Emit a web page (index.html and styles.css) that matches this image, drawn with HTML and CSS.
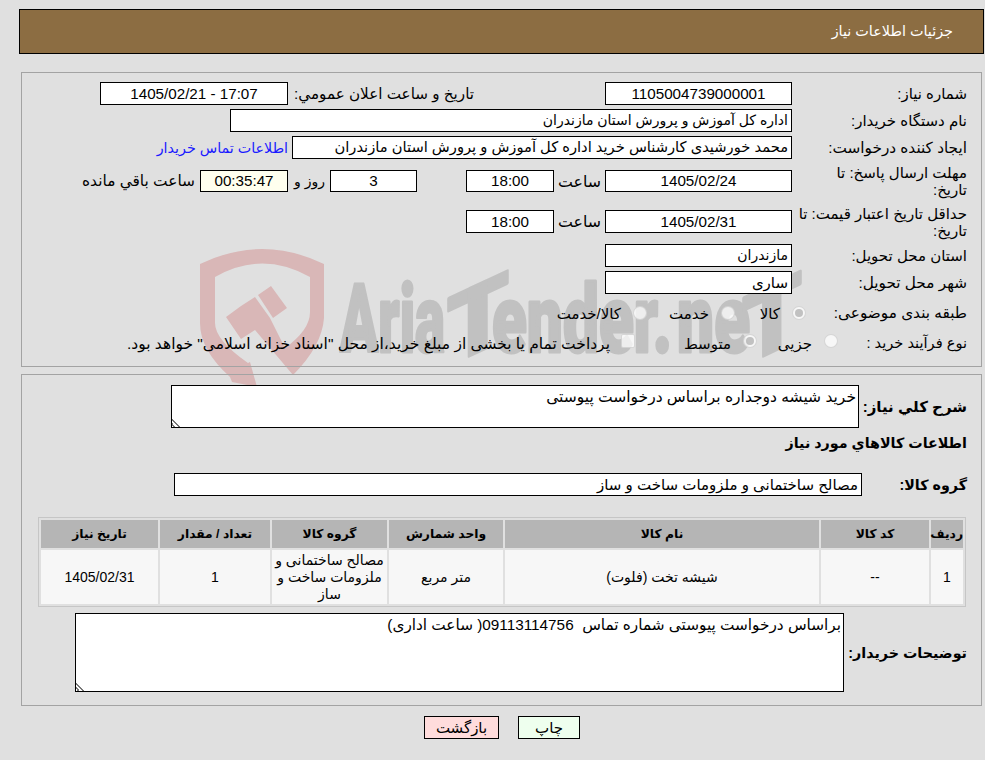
FILE: index.html
```html
<!DOCTYPE html>
<html lang="fa" dir="rtl">
<head>
<meta charset="utf-8">
<title>جزئیات اطلاعات نیاز</title>
<link rel="stylesheet" href="styles.css">
</head>
<body>
<svg class="watermark" viewBox="0 0 985 760" width="985" height="760" aria-hidden="true">
  <path class="wm-red" d="M200 264Q262 234 324 264V318Q322 346 293 375L255 330L241 339L226 317L241 306L255 297L270 318L285 348Q310 330 310 312V277Q262 250 215 277V323Q215 340 248 363L250 362L257 387L232 382L230 377Q200 350 200 323Z"/>
  <path class="wm-red" d="M258 295L271 286L287 308L273 318Z"/>
  <g class="wm-text">
    <text x="340" y="352" textLength="105" lengthAdjust="spacingAndGlyphs">Aria</text>
    <text class="wm-t1" x="447" y="352" textLength="62" lengthAdjust="spacingAndGlyphs">T</text>
    <text x="492" y="352" textLength="180" lengthAdjust="spacingAndGlyphs">ender.</text>
    <text x="677" y="352" textLength="73" lengthAdjust="spacingAndGlyphs">ne</text>
    <text class="wm-t2" x="742" y="352" textLength="60" lengthAdjust="spacingAndGlyphs">T</text>
  </g>
</svg>

<header class="page-head">جزئیات اطلاعات نیاز</header>

<section class="panel panel-info">
  <div class="row">
    <div class="label">شماره نیاز:</div>
    <div class="box w187 center">1105004739000001</div>
    <div class="label-announce">تاریخ و ساعت اعلان عمومي:</div>
    <div class="box w188 center" dir="ltr">1405/02/21 - 17:07</div>
  </div>
  <div class="row">
    <div class="label">نام دستگاه خریدار:</div>
    <div class="box w562 t14">اداره کل آموزش و پرورش استان مازندران</div>
  </div>
  <div class="row">
    <div class="label t153">ایجاد کننده درخواست:</div>
    <div class="box w500 t147">محمد خورشیدی کارشناس خرید اداره کل آموزش و پرورش استان مازندران</div>
    <a class="contact" href="#">اطلاعات تماس خریدار</a>
  </div>
  <div class="row row-deadline">
    <div class="label">مهلت ارسال پاسخ: تا تاریخ:</div>
    <div class="box w187 h22 center">1405/02/24</div>
    <div class="hour">ساعت</div>
    <div class="box w88 h22 center">18:00</div>
    <div class="spacer49"></div>
    <div class="box w87 h22 center">3</div>
    <div class="days">روز و</div>
    <div class="box w88 h22 center remain">00:35:47</div>
    <div class="remain-text">ساعت باقي مانده</div>
  </div>
  <div class="row row-validity">
    <div class="label label-validity">حداقل تاریخ اعتبار قیمت: تا تاریخ:</div>
    <div class="box w187 center">1405/02/31</div>
    <div class="hour">ساعت</div>
    <div class="box w88 center">18:00</div>
  </div>
  <div class="row">
    <div class="label">استان محل تحویل:</div>
    <div class="box w187 t14">مازندران</div>
  </div>
  <div class="row">
    <div class="label t153">شهر محل تحویل:</div>
    <div class="box w187">ساری</div>
  </div>
  <div class="row row-subject">
    <div class="label label-subject t153">طبقه بندی موضوعی:</div>
    <div class="choice w71"><span class="radio on"></span>کالا</div>
    <div class="choice w88"><span class="radio"></span>خدمت</div>
    <div class="choice"><span class="radio"></span>کالا/خدمت</div>
  </div>
  <div class="row row-process">
    <div class="label label-process">نوع فرآیند خرید :</div>
    <div class="choice w81"><span class="radio"></span>جزیی</div>
    <div class="choice w122"><span class="radio on"></span>متوسط</div>
    <div class="choice t155"><span class="check"></span>پرداخت تمام یا بخشی از مبلغ خرید،از محل "اسناد خزانه اسلامی" خواهد بود.</div>
  </div>
</section>

<section class="panel panel-goods">
  <div class="row row-desc">
    <div class="label-strong label-desc">شرح کلي نیاز:</div>
    <textarea class="area area-desc" readonly>خرید شیشه دوجداره براساس درخواست پیوستی</textarea>
  </div>
  <h2 class="goods-title">اطلاعات کالاهاي مورد نیاز</h2>
  <div class="row row-group">
    <div class="label-strong w105">گروه کالا:</div>
    <div class="box w688">مصالح ساختمانی و ملزومات ساخت و ساز</div>
  </div>
  <table class="goods">
    <colgroup>
      <col class="c1"><col class="c2"><col class="c3"><col class="c4"><col class="c5"><col class="c6"><col class="c7">
    </colgroup>
    <thead>
      <tr><th>ردیف</th><th>کد کالا</th><th>نام کالا</th><th>واحد شمارش</th><th>گروه کالا</th><th>تعداد / مقدار</th><th>تاریخ نیاز</th></tr>
    </thead>
    <tbody>
      <tr><td>1</td><td>--</td><td>شیشه تخت (فلوت)</td><td>متر مربع</td><td>مصالح ساختمانی و ملزومات ساخت و ساز</td><td>1</td><td>1405/02/31</td></tr>
    </tbody>
  </table>
  <div class="row row-note">
    <div class="label-strong w123">توضیحات خریدار:</div>
    <textarea class="area area-note" readonly>براساس درخواست پیوستی شماره تماس  09113114756( ساعت اداری)</textarea>
  </div>
</section>

<div class="actions">
  <button class="btn btn-print" type="button">چاپ</button>
  <button class="btn btn-back" type="button">بازگشت</button>
</div>
</body>
</html>
```
FILE: styles.css
```css
* { box-sizing: border-box; }
html, body { margin: 0; padding: 0; }
body {
  position: relative;
  width: 985px;
  height: 760px;
  overflow: hidden;
  background: #e0e0e0;
  color: #000;
  font-family: "Liberation Sans", "DejaVu Sans", sans-serif;
  font-size: 15px;
}
.watermark { position: absolute; left: 0; top: 0; direction: ltr; }
.wm-red { fill: #d9b7b7; }
.wm-text {
  fill: #c1c1c1;
  stroke: #c1c1c1;
  stroke-width: 3px;
  stroke-linejoin: round;
  font-family: Roboto, sans-serif;
  font-weight: 900;
  font-size: 95px;
}
.wm-t1 { transform-box: fill-box; transform-origin: center; transform: skewY(-25deg); }
.wm-t2 { transform-box: fill-box; transform-origin: center; transform: skewY(-25deg); }

.t14 { font-size: 14px; }
.t147 { font-size: 14.7px; }
.t153 { font-size: 15.3px; }
.t155 { font-size: 15.5px; }

.page-head {
  position: relative;
  height: 45px;
  margin: 9px 1px 0 19px;
  padding: 0 30px 0 0;
  border: 1px solid #000;
  background: #8c6d42;
  color: #fff;
  font-size: 14.4px;
  line-height: 43px;
}
.panel {
  position: relative;
  margin: 0 3px 0 21px;
  border: 1px solid #a3a3a3;
}
.panel-info { height: 295px; margin-top: 18px; padding: 9px 14px 0 0; }
.panel-goods { height: 332px; margin-top: 7px; padding: 10px 14px 0 0; }

.row { display: flex; align-items: center; height: 23px; margin-bottom: 4px; }
.row-deadline { height: 36px; }
.row-validity { height: 37px; }
.row-subject { margin-top: 7px; margin-bottom: 8px; }
.row-process { margin-bottom: 0; }
.label { flex: none; width: 175px; padding-left: 8px; line-height: 17px; }
.label-validity { padding-left: 0; }
.label-subject { width: 150px; padding-left: 0; }
.label-process { width: 118px; padding-left: 0; font-size: 14.6px; }
.label-announce { flex: none; width: 186px; margin-right: 131px; font-size: 15.2px; white-space: nowrap; }
.label-strong { flex: none; font-size: 14.3px; font-weight: 700; white-space: nowrap; }
.label-desc { width: 108px; font-size: 15px; }
.w105 { width: 105px; }
.w123 { width: 123px; }

.box {
  flex: none;
  height: 23px;
  padding: 0 3px;
  border: 1px solid #000;
  background: #fff;
  line-height: 21px;
  white-space: nowrap;
  overflow: hidden;
}
.h22 { height: 22px; line-height: 20px; }
.center { font-size: 15.2px; text-align: center; }
.remain { background: #ffffee; }
.w187 { width: 187px; }
.w188 { width: 188px; }
.w562 { width: 562px; }
.w500 { width: 500px; }
.w88 { width: 88px; }
.w87 { width: 87px; }
.w688 { width: 688px; }
.contact { margin-right: 4px; color: #1a1aff; font-size: 14.3px; text-decoration: none; }
.hour { flex: none; width: 51px; font-size: 15.8px; text-align: center; }
.spacer49 { flex: none; width: 49px; }
.days { flex: none; width: 42px; padding-right: 5px; font-size: 14px; }
.remain-text { flex: none; margin-right: 5px; font-size: 15.4px; }

.choice { display: flex; align-items: center; flex: none; }
.row-subject .choice { padding-top: 3px; }
.w71 { width: 71px; }
.w81 { width: 81px; }
.w88.choice { width: 88px; }
.w122 { width: 122px; }
.radio, .check {
  position: relative;
  flex: none;
  width: 14px;
  height: 14px;
  margin: 0 11px 0 12px;
  border: 1px solid rgba(200, 200, 200, .7);
  background: rgba(255, 255, 255, .72);
}
.row-subject .radio { margin-top: -3px; }
.row-process .radio, .row-process .check { margin-top: -5px; }
.radio { border-radius: 50%; }
.check { border-radius: 2px; margin-left: 11px; }
.radio.on::after {
  content: "";
  position: absolute;
  inset: 2px;
  border-radius: 50%;
  background: rgba(170, 170, 170, .7);
}

.row-desc { height: 43px; margin-bottom: 0; }
.area {
  flex: none;
  display: block;
  margin: 0;
  padding: 2px;
  border: 1px solid #000;
  border-radius: 0;
  outline: 0;
  background: #fff;
  color: #000;
  font: inherit;
}
.area::-webkit-resizer {
  background: linear-gradient(45deg, transparent 10%, #777 10% 20%, transparent 20% 32%, #777 32% 42%, transparent 42%) left bottom / 10px 10px no-repeat;
}
.area-desc { width: 688px; height: 43px; font-size: 15.5px; }
.area-note { width: 769px; height: 79px; font-size: 15.3px; }
.goods-title { margin: 6px 0 0; height: 18px; font-size: 14.3px; font-weight: 700; line-height: 18px; }
.row-group { margin: 21px 0 0; }
.row-note { height: 79px; margin: 6px 0 0; }

.goods {
  width: 928px;
  margin: 21px 1px 0 0;
  border: 1px solid #c6c6c6;
  border-collapse: separate;
  border-spacing: 2px;
  table-layout: fixed;
}
.c1 { width: 32px; }
.c2 { width: 108px; }
.c3 { width: 314px; }
.c4 { width: 114px; }
.c5 { width: 115px; }
.c6 { width: 110px; }
.c7 { width: 117px; }
.goods th {
  height: 28px;
  padding: 0;
  background: #b5b5b5;
  font-size: 12.3px;
  font-weight: 700;
  text-align: center;
}
.goods td {
  height: 54px;
  padding: 0 1px;
  background: #f7f7f7;
  font-size: 14px;
  text-align: center;
  line-height: 17px;
}

.actions { position: relative; display: flex; justify-content: center; gap: 19px; margin-top: 10px; padding-left: 19px; }
.btn {
  height: 23px;
  padding: 0;
  border: 1px solid #000;
  border-radius: 0;
  color: #000;
  font: inherit;
}
.btn-print { width: 62px; background: #eeffee; }
.btn-back { width: 75px; background: #ffdcdc; }
```
